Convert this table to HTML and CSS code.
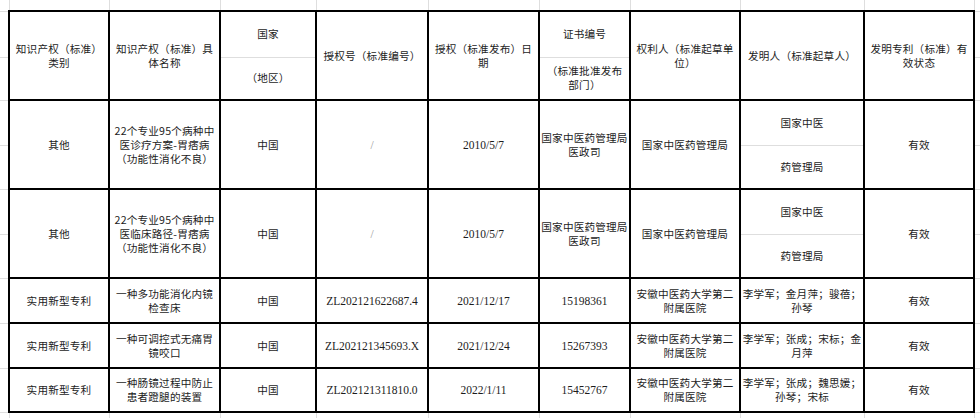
FILE: index.html
```html
<!DOCTYPE html>
<html lang="zh-CN">
<head>
<meta charset="utf-8">
<title>知识产权（标准）</title>
<link rel="stylesheet" href="styles.css">
</head>
<body>
<table class="sheet">
  <colgroup>
    <col class="c-gl">
    <col class="c1"><col class="c2"><col class="c3"><col class="c4"><col class="c5">
    <col class="c6"><col class="c7"><col class="c8"><col class="c9">
    <col class="c-gr">
  </colgroup>
  <tr class="r-top">
    <td class="g g-tl"></td><td class="g"></td><td class="g"></td><td class="g"></td><td class="g"></td><td class="g"></td>
    <td class="g"></td><td class="g"></td><td class="g"></td><td class="g"></td><td class="g g-tr"></td>
  </tr>
  <tr class="r46">
    <td class="g g-l"></td>
    <td class="c" rowspan="2">知识产权（标准）<br>类别</td>
    <td class="c" rowspan="2">知识产权（标准）具<br>体名称</td>
    <td class="c split-top">国家</td>
    <td class="c" rowspan="2">授权号（标准编号）</td>
    <td class="c" rowspan="2">授权（标准发布）日<br>期</td>
    <td class="c split-top">证书编号</td>
    <td class="c" rowspan="2">权利人（标准起草单<br>位）</td>
    <td class="c" rowspan="2">发明人（标准起草人）</td>
    <td class="c" rowspan="2">发明专利（标准）有<br>效状态</td>
    <td class="g g-r"></td>
  </tr>
  <tr class="r43">
    <td class="g g-l"></td>
    <td class="c split-bot">（地区）</td>
    <td class="c split-bot">（标准批准发布<br>部门）</td>
    <td class="g g-r"></td>
  </tr>

  <tr class="r45">
    <td class="g g-l"></td>
    <td class="c" rowspan="2">其他</td>
    <td class="c" rowspan="2">22个专业95个病种中<br>医诊疗方案-胃痞病<br>（功能性消化不良）</td>
    <td class="c" rowspan="2">中国</td>
    <td class="c num muted" rowspan="2">/</td>
    <td class="c num" rowspan="2">2010/5/7</td>
    <td class="c" rowspan="2">国家中医药管理局<br>医政司</td>
    <td class="c" rowspan="2">国家中医药管理局</td>
    <td class="c split-top">国家中医</td>
    <td class="c" rowspan="2">有效</td>
    <td class="g g-r"></td>
  </tr>
  <tr class="r44">
    <td class="g g-l"></td>
    <td class="c split-bot">药管理局</td>
    <td class="g g-r"></td>
  </tr>

  <tr class="r45">
    <td class="g g-l"></td>
    <td class="c" rowspan="2">其他</td>
    <td class="c" rowspan="2">22个专业95个病种中<br>医临床路径-胃痞病<br>（功能性消化不良）</td>
    <td class="c" rowspan="2">中国</td>
    <td class="c num muted" rowspan="2">/</td>
    <td class="c num" rowspan="2">2010/5/7</td>
    <td class="c" rowspan="2">国家中医药管理局<br>医政司</td>
    <td class="c" rowspan="2">国家中医药管理局</td>
    <td class="c split-top">国家中医</td>
    <td class="c" rowspan="2">有效</td>
    <td class="g g-r"></td>
  </tr>
  <tr class="r44">
    <td class="g g-l"></td>
    <td class="c split-bot">药管理局</td>
    <td class="g g-r"></td>
  </tr>

  <tr class="r45">
    <td class="g g-l"></td>
    <td class="c">实用新型专利</td>
    <td class="c">一种多功能消化内镜<br>检查床</td>
    <td class="c">中国</td>
    <td class="c num">ZL202121622687.4</td>
    <td class="c num">2021/12/17</td>
    <td class="c num">15198361</td>
    <td class="c">安徽中医药大学第二<br>附属医院</td>
    <td class="c">李学军；金月萍；骏蓓；<br>孙琴</td>
    <td class="c">有效</td>
    <td class="g g-r"></td>
  </tr>
  <tr class="r45">
    <td class="g g-l"></td>
    <td class="c">实用新型专利</td>
    <td class="c">一种可调控式无痛胃<br>镜咬口</td>
    <td class="c">中国</td>
    <td class="c num">ZL202121345693.X</td>
    <td class="c num">2021/12/24</td>
    <td class="c num">15267393</td>
    <td class="c">安徽中医药大学第二<br>附属医院</td>
    <td class="c">李学军；张成；宋标；金<br>月萍</td>
    <td class="c">有效</td>
    <td class="g g-r"></td>
  </tr>
  <tr class="r44">
    <td class="g g-l"></td>
    <td class="c">实用新型专利</td>
    <td class="c">一种肠镜过程中防止<br>患者蹬腿的装置</td>
    <td class="c">中国</td>
    <td class="c num">ZL202121311810.0</td>
    <td class="c num">2022/1/11</td>
    <td class="c num">15452767</td>
    <td class="c">安徽中医药大学第二<br>附属医院</td>
    <td class="c">李学军；张成；魏思媛；<br>孙琴；宋标</td>
    <td class="c">有效</td>
    <td class="g g-r"></td>
  </tr>
  <tr class="r-bot">
    <td class="g g-bl"></td><td class="g"></td><td class="g"></td><td class="g"></td><td class="g"></td><td class="g"></td>
    <td class="g"></td><td class="g"></td><td class="g"></td><td class="g"></td><td class="g g-br"></td>
  </tr>
</table>
</body>
</html>
```
FILE: styles.css
```css
html, body {
  margin: 0;
  padding: 0;
  background: #ffffff;
  overflow: hidden;
}

.sheet {
  border-collapse: collapse;
  table-layout: fixed;
  width: 980px;
  font-family: "Noto Sans CJK SC", "Noto Sans", sans-serif;
  font-size: 10.6px;
  letter-spacing: 0.2px;
  line-height: 14px;
  color: #1c1c1c;
}

.c-gl { width: 9px; }
.c1 { width: 100px; }
.c2 { width: 111px; }
.c3 { width: 96px; }
.c4 { width: 112px; }
.c5 { width: 111px; }
.c6 { width: 91px; }
.c7 { width: 110px; }
.c8 { width: 124px; }
.c9 { width: 110px; }
.c-gr { width: 6px; }

.r-top { height: 11px; }
.r46 { height: 46px; }
.r43 { height: 43px; }
.r45 { height: 45px; }
.r44 { height: 44px; }
.r-bot { height: 6px; }

.sheet td {
  padding: 0 1px;
  vertical-align: middle;
  text-align: center;
  white-space: nowrap;
  overflow: visible;
}

.g {
  border: 1px solid #dedede;
}
.r-top .g { border-top: none; }
.r-bot .g { border-bottom: none; }
.g-l, .g-tl, .g-bl { border-left: none; }
.g-r, .g-tr, .g-br { border-right: none; }

.c {
  border: 2px solid #000000;
}
.c.split-top { border-bottom: 1px solid #dedede; }
.c.split-bot { border-top: 1px solid #dedede; }

.num {
  font-family: "Liberation Serif", "Times New Roman", serif;
  font-size: 11.5px;
  letter-spacing: 0;
}
.muted { color: #9a9a9a; }
```
